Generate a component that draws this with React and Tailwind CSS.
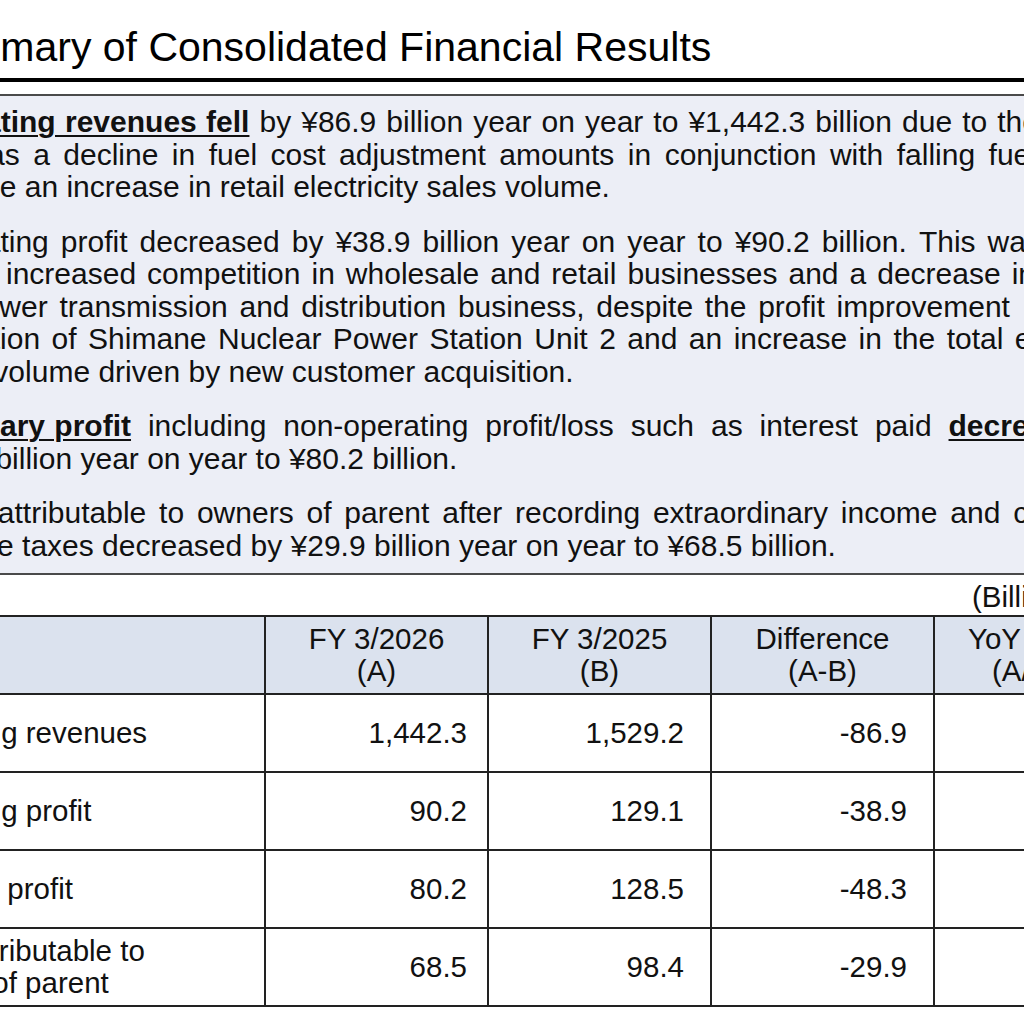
const paras = [
  [
    { cls: 'ml-[-86px] w-[1125px]', items: [{ t: 'Operating revenues fell', b: true }, 'by', '¥86.9', 'billion', 'year', 'on', 'year', 'to', '¥1,442.3', 'billion', 'due', 'to', 'the'] },
    { cls: 'ml-[-12px] w-[1049px]', items: ['as', 'a', 'decline', 'in', 'fuel', 'cost', 'adjustment', 'amounts', 'in', 'conjunction', 'with', 'falling', 'fuel'] },
    { cls: 'ml-[-52px]', text: 'while an increase in retail electricity sales volume.' },
  ],
  [
    { cls: 'ml-[-83px] w-[1124px]', items: ['Operating', 'profit', 'decreased', 'by', '¥38.9', 'billion', 'year', 'on', 'year', 'to', '¥90.2', 'billion.', 'This', 'was'] },
    { cls: 'ml-[6px] w-[1029px]', items: ['increased', 'competition', 'in', 'wholesale', 'and', 'retail', 'businesses', 'and', 'a', 'decrease', 'in'] },
    { cls: 'ml-[-34px] w-[1044px]', items: ['power', 'transmission', 'and', 'distribution', 'business,', 'despite', 'the', 'profit', 'improvement'] },
    { cls: 'ml-[-85px] w-[1225px]', items: ['operation', 'of', 'Shimane', 'Nuclear', 'Power', 'Station', 'Unit', '2', 'and', 'an', 'increase', 'in', 'the', 'total', 'electricity'] },
    { cls: 'ml-[-85px]', text: 'sales volume driven by new customer acquisition.' },
  ],
  [
    { cls: 'ml-[-80px] w-[1177px]', items: [{ t: 'Ordinary profit', b: true }, 'including', 'non-operating', 'profit/loss', 'such', 'as', 'interest', 'paid', { t: 'decreased', b: true }] },
    { cls: 'ml-[-88px]', text: '¥48.3 billion year on year to ¥80.2 billion.' },
  ],
  [
    { cls: 'ml-[-85px] w-[1225px]', items: ['Profit', 'attributable', 'to', 'owners', 'of', 'parent', 'after', 'recording', 'extraordinary', 'income', 'and', 'corporate'] },
    { cls: 'ml-[-83px]', text: 'income taxes decreased by ¥29.9 billion year on year to ¥68.5 billion.' },
  ],
]

const rows = [
  { label: ['Operating revenues'], pad: 'pl-[26px]', a: '1,442.3', b: '1,529.2', d: '-86.9', y: '94.3' },
  { label: ['Operating profit'], pad: 'pl-[26px]', a: '90.2', b: '129.1', d: '-38.9', y: '69.9' },
  { label: ['Ordinary profit'], pad: 'pl-[24px]', a: '80.2', b: '128.5', d: '-48.3', y: '62.4' },
  { label: ['Profit attributable to', 'owners of parent'], pad: 'pl-[27px]', a: '68.5', b: '98.4', d: '-29.9', y: '69.6' },
]

const heads = [
  ['FY 3/2026', '(A)'],
  ['FY 3/2025', '(B)'],
  ['Difference', '(A-B)'],
]

function Line({ line }) {
  if (line.text) {
    return <div className={`whitespace-nowrap ${line.cls}`}>{line.text}</div>
  }
  return (
    <div className={`flex justify-between whitespace-nowrap ${line.cls}`}>
      {line.items.map((it, i) =>
        typeof it === 'string' ? (
          <span key={i}>{it}</span>
        ) : (
          <span key={i} className="font-bold underline decoration-2 underline-offset-[3px] [word-spacing:1px]">
            {it.t}
          </span>
        )
      )}
    </div>
  )
}

export default function App() {
  return (
    <div className="w-[1024px] h-[1024px] overflow-hidden bg-white text-[#111] [font-family:'Liberation_Sans',Arial,sans-serif]">
      <div className="pt-[27px] ml-[-84px] whitespace-nowrap text-[41px] leading-[41px] text-black">
        Summary of Consolidated Financial Results
      </div>
      <div className="mt-[10px] h-[4px] bg-black" />

      <div className="mt-[12px] border-t-2 border-b-2 border-[#4a4a4a] bg-[#eceef6] pt-[10px] pb-[11px] text-[30px] leading-[32.5px]">
        {paras.map((p, i) => (
          <div key={i} className={i > 0 ? 'mt-[22px]' : ''}>
            {p.map((line, j) => (
              <Line key={j} line={line} />
            ))}
          </div>
        ))}
      </div>

      <div className="mt-[6px] h-[32px] ml-[972px] whitespace-nowrap text-[29.5px] leading-[32px]">
        (Billions of yen)
      </div>

      <div className="mt-[2px] ml-[-140px] w-[1300px] grid grid-cols-[404px_223px_223px_223px_184px] border-t-2 border-l-2 border-[#222] text-[29.5px] leading-[32px]">
        <div className="h-[78px] bg-[#dbe2ee] border-r-2 border-b-2 border-[#222]" />
        {heads.map((h, i) => (
          <div key={i} className="h-[78px] bg-[#dbe2ee] border-r-2 border-b-2 border-[#222] flex flex-col items-center justify-center whitespace-nowrap">
            <span>{h[0]}</span>
            <span>{h[1]}</span>
          </div>
        ))}
        <div className="h-[78px] bg-[#dbe2ee] border-r-2 border-b-2 border-[#222] flex flex-col justify-center whitespace-nowrap">
          <span className="ml-[33px]">YoY change</span>
          <span className="ml-[57px]">(A/B)</span>
        </div>
        {rows.map((r, i) => (
          <div key={i} className="contents">
            <div className={`h-[78px] border-r-2 border-b-2 border-[#222] flex flex-col justify-center whitespace-nowrap ${r.pad}`}>
              {r.label.map((l, k) => (
                <span key={k}>{l}</span>
              ))}
            </div>
            <div className="h-[78px] border-r-2 border-b-2 border-[#222] pr-[20px] flex items-center justify-end">{r.a}</div>
            <div className="h-[78px] border-r-2 border-b-2 border-[#222] pr-[26px] flex items-center justify-end">{r.b}</div>
            <div className="h-[78px] border-r-2 border-b-2 border-[#222] pr-[26px] flex items-center justify-end">{r.d}</div>
            <div className="h-[78px] border-r-2 border-b-2 border-[#222] pr-[26px] flex items-center justify-end">{r.y}</div>
          </div>
        ))}
      </div>
    </div>
  )
}
